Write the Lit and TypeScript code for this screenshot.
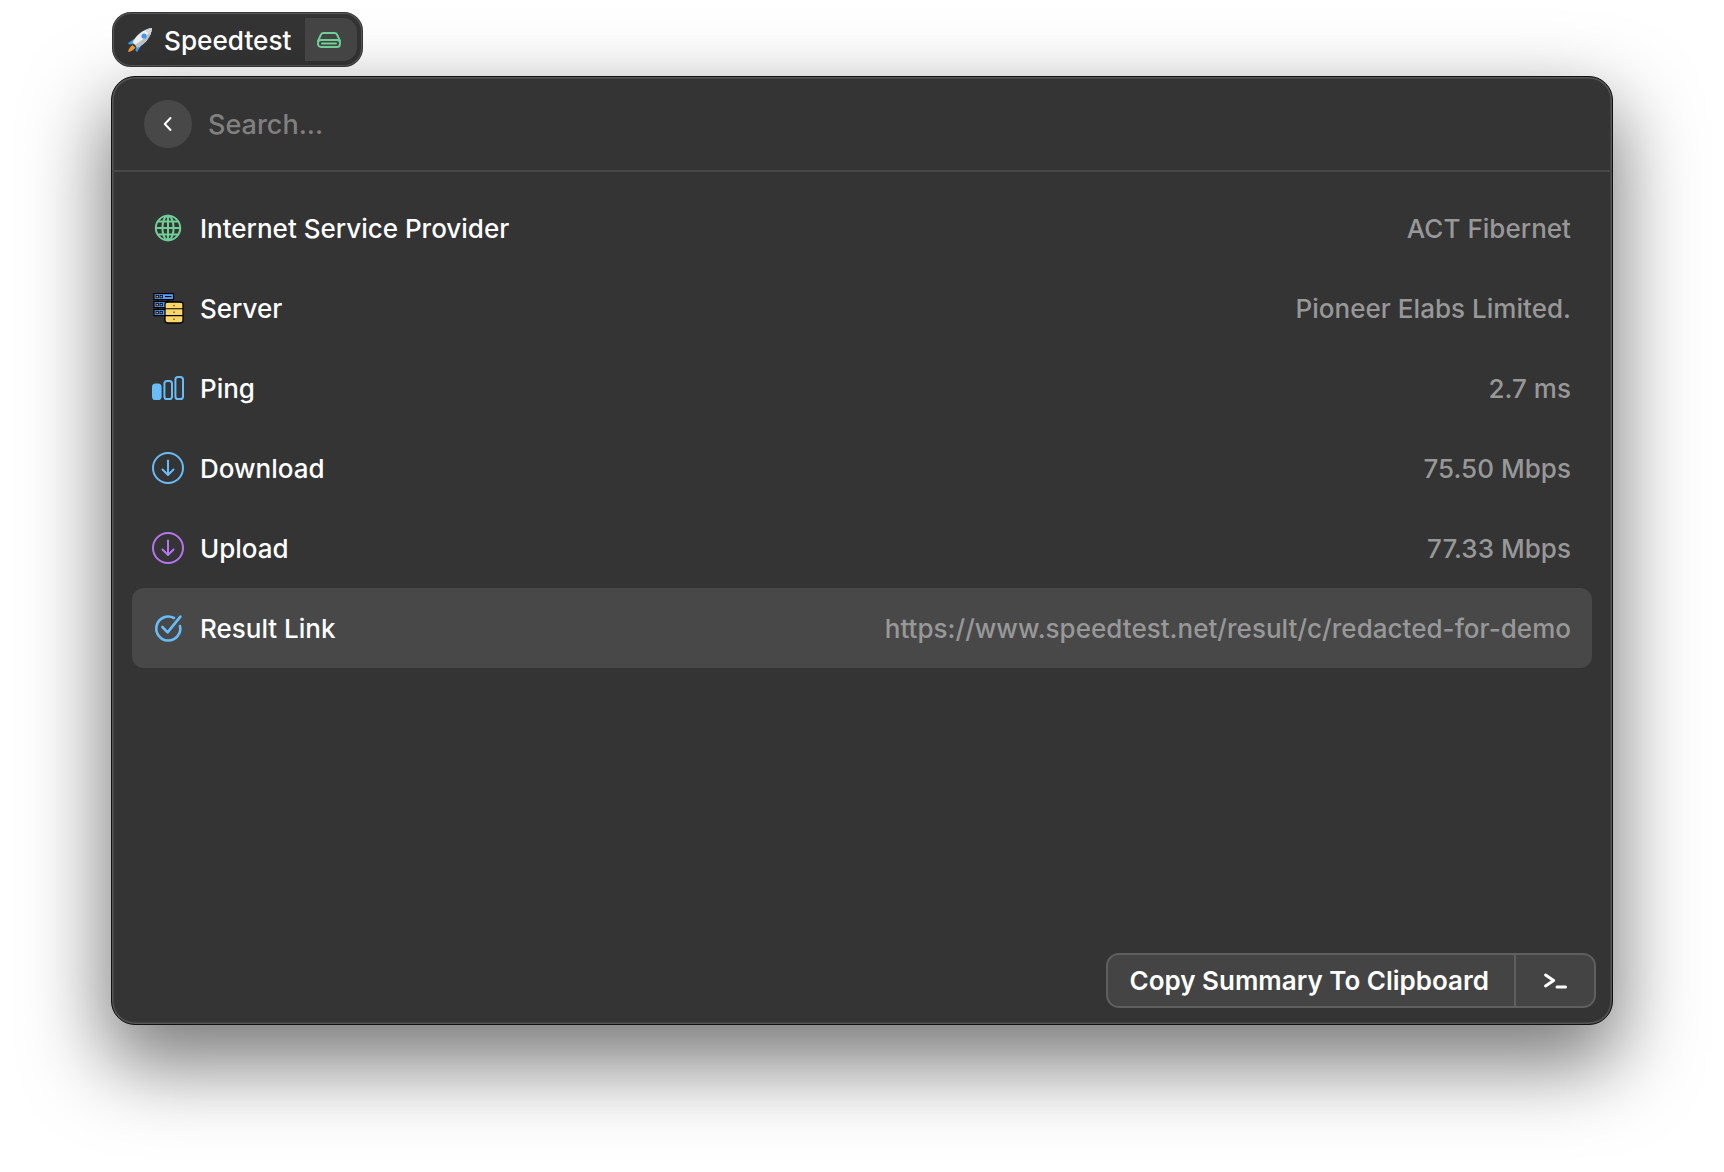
import { LitElement, html, css, svg } from "lit";
import { customElement } from "lit/decorators.js";

const rocket = svg`<svg class="rocket" viewBox="0 0 26 26" width="26" height="26">
  <path d="M7 12 L1 16 L2 17.5 L8 17 Z" fill="#3f97e8"/>
  <path d="M14 19 L10 25 L8.6 24 L9 18 Z" fill="#3f97e8"/>
  <path d="M5.5 18 C3 19.5 1.6 22.5 1 25 C4 24.6 7 23 8.4 20.6 Z" fill="#f0962b"/>
  <path d="M5.6 15.4 C8.4 9 15 2.6 25 1 C24 10.6 17.6 17.6 10.6 20.4 Z" fill="#eceef0"/>
  <path d="M25 1 C24 10.6 17.6 17.6 10.6 20.4 L8 17.8 C15 14 21 8 25 1 Z" fill="#b8bfc6"/>
  <path d="M25 1 C24.7 3.6 24 6 23 8 L18 3.2 C20 2.2 22.4 1.4 25 1 Z" fill="#cfd4d9"/>
  <circle cx="17" cy="9" r="2.6" fill="#3f97e8"/>
</svg>`;

const drive = svg`<svg viewBox="0 0 24 16" width="24" height="16" fill="none" stroke="#6fcf97" stroke-width="1.9" stroke-linejoin="round" stroke-linecap="round">
  <path d="M1 9 L4 2.5 Q4.7 1 6.4 1 H17.6 Q19.3 1 20 2.5 L23 9"/>
  <rect x="1" y="8" width="22" height="7" rx="3"/>
  <path d="M5 11.5 H19"/>
</svg>`;

const chevron = svg`<svg viewBox="0 0 12 16" width="12" height="16" fill="none" stroke="#fff" stroke-width="2" stroke-linecap="round" stroke-linejoin="round"><path d="M8.5 2 L2.8 8 L8.5 14"/></svg>`;

const globe = svg`<svg viewBox="0 0 32 32" width="32" height="32" fill="none" stroke="#6fcf97" stroke-width="2">
  <circle cx="16" cy="16" r="12.2"/>
  <ellipse cx="16" cy="16" rx="5.6" ry="12.2"/>
  <path d="M16 3.8 V28.2 M3.8 16 H28.2 M5.6 9.6 H26.4 M5.6 22.4 H26.4"/>
</svg>`;

const serverUnit = (y: number) => svg`
  <rect x="2" y="${y}" width="19.5" height="6" fill="#5b9ff8" stroke="#000" stroke-width="1.2"/>
  <rect x="4" y="${y + 1.8}" width="2.4" height="2.4" fill="#f3a06b" stroke="#000" stroke-width=".8"/>
  <rect x="8" y="${y + 1.8}" width="2.4" height="2.4" fill="#5b9ff8" stroke="#000" stroke-width=".8"/>
  <path d="M13 ${y + 3} H19.5" stroke="#000" stroke-width="1"/>`;

const server = svg`<svg viewBox="0 0 32 32" width="32" height="32">
  <path d="M6 8 V10 M16 8 V10 M6 16 V18" stroke="#000" stroke-width="1.4"/>
  ${serverUnit(1.6)}${serverUnit(9.6)}${serverUnit(17.6)}
  <path d="M13 12 Q13 10 17 10 H27 Q31 10 31 12 V28.6 Q31 31 28 31 H16 Q13 31 13 28.6 Z" fill="#fbd666" stroke="#000" stroke-width="1.3"/>
  <path d="M13 16.8 H31 M13 23.6 H31" fill="none" stroke="#000" stroke-width="1.1"/>
  <path d="M22 13 V14.2 M22 19.6 V20.8 M22 26.6 V27.8" stroke="#000" stroke-width="1"/>
</svg>`;

const ping = svg`<svg viewBox="0 0 32 32" width="32" height="32" fill="none" stroke="#68bdf8" stroke-width="2">
  <rect x="1" y="12.4" width="7.6" height="14.6" rx="2.6" fill="#68bdf8"/>
  <rect x="12.4" y="9" width="7.6" height="18" rx="2.6"/>
  <rect x="23.4" y="5" width="7.6" height="22" rx="2.6"/>
</svg>`;

const arrowCircle = (c: string) => svg`<svg viewBox="0 0 32 32" width="32" height="32" fill="none" stroke="${c}" stroke-width="2" stroke-linecap="round" stroke-linejoin="round">
  <circle cx="16" cy="16" r="15"/>
  <path d="M16 8.5 V23 M10.5 17.5 L16 23 L21.5 17.5"/>
</svg>`;

const check = svg`<svg viewBox="0 0 32 32" width="32" height="32" fill="none" stroke="#68bdf8" stroke-width="2.6" stroke-linecap="round" stroke-linejoin="round">
  <path d="M22 6 A12 12 0 1 0 28 14"/>
  <path d="M10.4 15 L15.6 20.4 L28.4 4.6"/>
</svg>`;

const terminal = svg`<svg viewBox="0 0 24 16" width="24" height="16" fill="none" stroke="#fff" stroke-width="3" stroke-linecap="round" stroke-linejoin="round">
  <path d="M2.6 2 L10.6 7.5 L2.6 13"/><path d="M14 14 H22.5"/>
</svg>`;

const rows = [
  { icon: globe, label: "Internet Service Provider", value: "ACT Fibernet" },
  { icon: server, label: "Server", value: "Pioneer Elabs Limited." },
  { icon: ping, label: "Ping", value: "2.7 ms" },
  { icon: arrowCircle("#68bdf8"), label: "Download", value: "75.50 Mbps" },
  { icon: arrowCircle("#b675f0"), label: "Upload", value: "77.33 Mbps" },
  { icon: check, label: "Result Link", value: "https://www.speedtest.net/result/c/redacted-for-demo", selected: true },
];

@customElement("app-root")
export class AppRoot extends LitElement {
  static styles = css`
    :host {
      display: block;
      min-height: 1172px;
      box-sizing: border-box;
      padding: 12px 0 0 111px;
      background: #fff;
      font-family: Inter, "Liberation Sans", sans-serif;
      overflow: hidden;
    }
    .pill {
      box-sizing: border-box;
      display: flex;
      align-items: center;
      width: 251px;
      height: 55px;
      background: #343434;
      border: 2px solid #565656;
      outline: 1px solid rgba(0, 0, 0, 0.35);
      outline-offset: -1px;
      border-radius: 19px;
      padding: 4px;
      color: #fff;
      font-size: 26.2px;
      font-weight: 450;
      margin: 0 0 9px 1px;
    }
    .rocket { margin-left: 9px; margin-right: 11px; flex: none; }
    .pill-name { flex: 1; padding-top: 1px; }
    .pill-tag {
      box-sizing: border-box;
      width: 52px;
      padding-right: 4px;
      align-self: stretch;
      background: #444;
      border-radius: 0 14px 14px 0;
      display: flex;
      align-items: center;
      justify-content: center;
    }
    .window {
      box-sizing: border-box;
      width: 1502px;
      height: 949px;
      background: #343434;
      border: 1px solid #111;
      box-shadow: inset 0 0 0 1.5px #565656, 0 34px 80px 6px rgba(0, 0, 0, 0.52);
      border-radius: 24px;
      display: flex;
      flex-direction: column;
    }
    .search {
      display: flex;
      align-items: center;
      gap: 16px;
      height: 93px;
      flex: none;
      padding-left: 32px;
      border-bottom: 2px solid #484848;
    }
    .back {
      width: 48px;
      height: 48px;
      border-radius: 50%;
      background: #484848;
      display: flex;
      align-items: center;
      justify-content: center;
    }
    .placeholder { color: #808080; font-size: 27px; font-weight: 450; padding-top: 2px; }
    .rows { display: flex; flex-direction: column; padding: 16px 20px 0; flex: 1; }
    .row {
      height: 80px;
      display: flex;
      align-items: center;
      padding: 0 21px 0 20px;
      border-radius: 12px;
      font-size: 26px;
      font-weight: 450;
    }
    .row.selected { background: #484848; }
    .icon { width: 32px; height: 32px; flex: none; margin-right: 16px; display: block; }
    .icon svg { display: block; }
    .label { color: #fff; flex: 1; }
    .value { color: #989898; letter-spacing: 0.03px; }
    .footer { display: flex; justify-content: flex-end; padding: 0 16px 16px 0; flex: none; }
    .action {
      box-sizing: border-box;
      display: flex;
      height: 55px;
      background: #444;
      border: 2px solid #5f5f5f;
      border-radius: 13px;
      color: #fff;
      font-size: 26px;
      font-weight: 600;
      align-items: stretch;
    }
    .action-label { display: flex; align-items: center; padding: 0 25px 0 22px; }
    .action-key {
      display: flex;
      align-items: center;
      justify-content: center;
      width: 78px;
      border-left: 2px solid #5f5f5f;
    }
  `;

  render() {
    return html`
      <div class="pill">
        ${rocket}
        <span class="pill-name">Speedtest</span>
        <span class="pill-tag">${drive}</span>
      </div>
      <div class="window">
        <div class="search">
          <div class="back">${chevron}</div>
          <span class="placeholder">Search...</span>
        </div>
        <div class="rows">
          ${rows.map(
            (r) => html`<div class="row ${r.selected ? "selected" : ""}">
              <span class="icon">${r.icon}</span>
              <span class="label">${r.label}</span>
              <span class="value">${r.value}</span>
            </div>`
          )}
        </div>
        <div class="footer">
          <div class="action">
            <span class="action-label">Copy Summary To Clipboard</span>
            <span class="action-key">${terminal}</span>
          </div>
        </div>
      </div>
    `;
  }
}
